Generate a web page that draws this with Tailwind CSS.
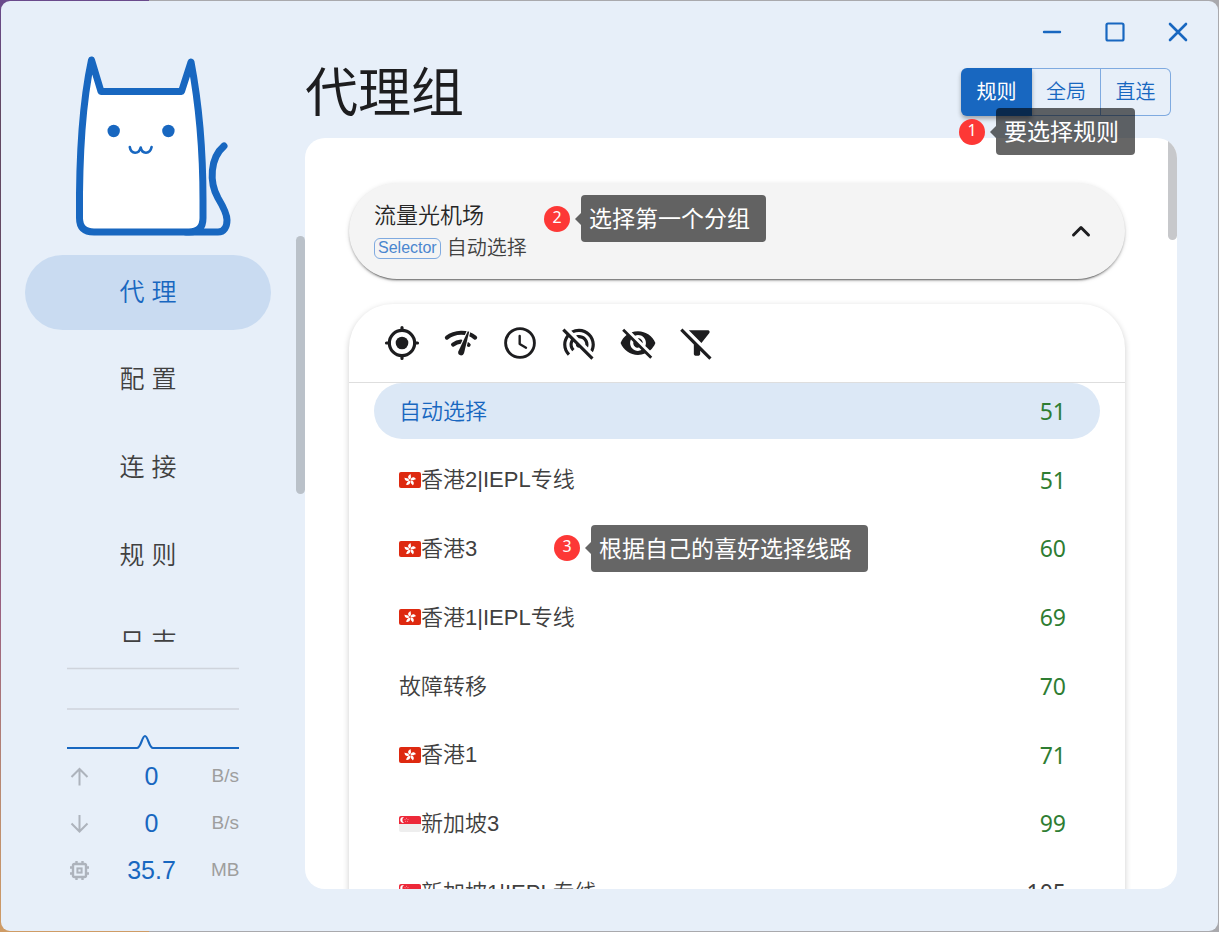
<!DOCTYPE html>
<html lang="zh-CN">
<head>
<meta charset="utf-8">
<meta name="viewport" content="width=device-width, initial-scale=1">
<title>代理组</title>
<script src="https://cdn.jsdelivr.net/npm/@tailwindcss/browser@4"></script>
</head>
<body class="h-screen overflow-hidden font-['Liberation_Sans','Noto_Sans_CJK_SC',sans-serif] font-[350] text-[#404040]">
<svg class="hidden" aria-hidden="true">
  <symbol id="hk" viewBox="0 0 22 16">
    <rect width="22" height="16" rx="2" fill="#de2910"/>
    <g fill="#fff" transform="translate(11 8.2)">
      <path id="petal" d="M-0.200-0.600C-2.800-2.200-2.200-5.300 0.900-6C0.100-4.900 2.200-3 -0.200-0.600Z"/>
      <use href="#petal" transform="rotate(72)"/><use href="#petal" transform="rotate(144)"/>
      <use href="#petal" transform="rotate(216)"/><use href="#petal" transform="rotate(288)"/>
    </g>
  </symbol>
  <symbol id="sg" viewBox="0 0 22 16">
    <path d="M2 0H20Q22 0 22 2V8H0V2Q0 0 2 0Z" fill="#ed2939"/>
    <path d="M0 8H22V14Q22 16 20 16H2Q0 16 0 14Z" fill="#eee"/>
    <path d="M5 1A3 3 0 1 0 5 6.800A3.400 3.400 0 0 1 5 1Z" fill="#fff"/>
    <g fill="#fff" fill-opacity=".6"><circle cx="7.500" cy="2.200" r=".5"/><circle cx="6" cy="3.400" r=".5"/><circle cx="9" cy="3.400" r=".5"/><circle cx="6.600" cy="5.200" r=".5"/><circle cx="8.500" cy="5.200" r=".5"/></g>
  </symbol>
</svg>

<div class="h-full bg-[#a9a9ad] bg-[linear-gradient(to_bottom,#6a4a8c,#624862_12%,#6a4a66_50%,#9a6080_65%,#b98a72_85%,#cf9c66)] bg-[length:149px_100%] bg-no-repeat p-px">
<div class="relative flex h-full overflow-hidden rounded-[9px] bg-[#e7eff9]">

  <!-- Sidebar -->
  <aside class="relative flex w-[304px] shrink-0 flex-col pt-[49px] pb-[38px]">
    <svg class="ml-[68px] h-[192px] w-[168px] shrink-0" viewBox="69 50 168 192" fill="none" stroke="#1867c0" stroke-width="7" stroke-linecap="round" stroke-linejoin="round" role="img" aria-label="Clash">
      <path d="M224 146C210 158 209 182 218 198C224 208 227 214 227 220C227 227 224 232 218 232H186"/>
      <path fill="#fff" d="M79.500 218C79 160 82 104 91.500 60L101 91.500H181.500L191 62C199 104 203 155 203 200V218Q203 232 189 232H94Q79.500 232 79.500 218Z"/>
      <g fill="#1867c0" stroke="none"><circle cx="113.700" cy="131" r="6.200"/><circle cx="168.400" cy="131" r="6.200"/></g>
      <path stroke-width="2.600" d="M129.800 147C131 154.500 139 154.500 140.700 147.500C142 154.500 150 154.500 151.600 147"/>
    </svg>

    <nav class="mt-[13px] ml-6 mr-[34px] h-[387px] shrink-0 overflow-hidden text-[25px]">
      <ul class="grid h-[438px] grid-rows-5">
        <li><a href="#proxies" aria-current="page" class="flex h-[75px] items-center justify-center rounded-full bg-[#c9dbf1] text-[#1867c0]">代 理</a></li>
        <li><a href="#profiles" class="flex h-[75px] items-center justify-center rounded-full">配 置</a></li>
        <li><a href="#connections" class="flex h-[75px] items-center justify-center rounded-full">连 接</a></li>
        <li><a href="#rules" class="flex h-[75px] items-center justify-center rounded-full">规 则</a></li>
        <li><a href="#logs" class="flex h-[75px] items-center justify-center rounded-full">日 志</a></li>
      </ul>
    </nav>

    <div class="mt-6 ml-[66px] w-[172px]">
      <svg class="h-[87px] w-full" viewBox="0 0 172 87" fill="none" aria-hidden="true">
        <path d="M0 2.500H172M0 43H172" stroke="#cfd4dc" stroke-width="1.500"/>
        <path d="M0 82H70C74 82 75 70 78 70S82 82 86 82H172" stroke="#1867c0" stroke-width="2.200"/>
      </svg>
      <dl class="text-[19px] text-[#9e9e9e]">
        <div class="flex h-[47px] items-center justify-between">
          <dt aria-label="上传"><svg class="size-[25px]" viewBox="0 0 25 25" fill="none" stroke="#adb3bc" stroke-width="2"><path d="M12.500 21.500V5M4.500 13L12.500 5L20.500 13"/></svg></dt>
          <dd class="flex-1 text-center font-normal text-[25px] text-[#1867c0]">0</dd><dd class="w-7 text-right">B/s</dd>
        </div>
        <div class="flex h-[47px] items-center justify-between">
          <dt aria-label="下载"><svg class="size-[25px]" viewBox="0 0 25 25" fill="none" stroke="#adb3bc" stroke-width="2"><path d="M12.500 4V20.500M4.500 12.500L12.500 20.500L20.500 12.500"/></svg></dt>
          <dd class="flex-1 text-center font-normal text-[25px] text-[#1867c0]">0</dd><dd class="w-7 text-right">B/s</dd>
        </div>
        <div class="flex h-[47px] items-center justify-between">
          <dt aria-label="内存"><svg class="size-[25px]" viewBox="0 0 25 25" fill="none" stroke="#adb3bc" stroke-width="2.400"><rect x="6" y="6" width="13" height="13" rx="1.500"/><rect x="10.400" y="10.400" width="4.200" height="4.200" stroke-width="2"/><path d="M9.500 3V6M15.500 3V6M9.500 19V22M15.500 19V22M3 9.500H6M3 15.500H6M19 9.500H22M19 15.500H22"/></svg></dt>
          <dd class="flex-1 text-center font-normal text-[25px] text-[#1867c0]">35.7</dd><dd class="w-7 text-right">MB</dd>
        </div>
      </dl>
    </div>
    <div class="absolute top-[235px] right-0 h-[258px] w-[9px] rounded-full bg-[#bac1c9]"></div>
  </aside>

  <!-- Content -->
  <main class="mr-[41px] mb-[42px] flex min-w-0 flex-1 flex-col">
    <div class="-mr-[14px] flex h-[61px] shrink-0 items-center justify-end gap-[37px]">
      <button aria-label="最小化"><svg class="size-[26px]" viewBox="0 0 26 26" fill="none" stroke="#1867c0" stroke-width="2.400" stroke-linecap="round"><path d="M5 13H21"/></svg></button>
      <button aria-label="最大化"><svg class="size-[26px]" viewBox="0 0 26 26" fill="none" stroke="#1867c0" stroke-width="2.200"><rect x="4.500" y="4.500" width="17" height="17" rx="1.500"/></svg></button>
      <button aria-label="关闭"><svg class="size-[26px]" viewBox="0 0 26 26" fill="none" stroke="#1867c0" stroke-width="2.600" stroke-linecap="round"><path d="M5 5L21 21M21 5L5 21"/></svg></button>
    </div>

    <header class="flex h-[76px] shrink-0 items-start justify-between">
      <h1 class="text-[53px] leading-[64px] font-normal text-[#1d1d1f]">代理组</h1>
      <div class="relative mt-[6px] mr-[6px] flex h-12 text-[20px] text-[#1867c0]" role="group" aria-label="模式">
        <button class="w-[71px] rounded-l-md bg-[#1867c0] font-normal text-white shadow-[0_3px_4px_rgba(0,0,0,0.3)]" aria-pressed="true">规则</button>
        <button class="w-[69px] border-y border-r border-[#7faae0]">全局</button>
        <button class="w-[70px] rounded-r-md border-y border-r border-[#7faae0]">直连</button>
        <!-- Step 1 -->
        <div class="absolute top-10 -left-[2px] z-10 flex items-center whitespace-nowrap text-white">
          <span class="flex size-[26px] items-center justify-center rounded-full bg-[#fd3836] pb-1 font-['Noto_Sans'] text-[16px] font-normal">1</span>
          <span class="ml-[5px] border-y-[6px] border-r-[6px] border-y-transparent border-r-black/60"></span>
          <span class="flex h-[47px] items-center rounded bg-black/60 pt-[2px] pr-4 pl-2 text-[23px] font-normal">要选择规则</span>
        </div>
      </div>
    </header>

    <section class="relative min-h-0 flex-1 overflow-hidden rounded-[20px] bg-white pt-[45px] pr-[52px] pl-11">
      <div class="relative flex h-24 items-center justify-between rounded-full bg-[#f4f4f4] pr-8 pl-[25px] shadow-[0_3px_1px_-2px_rgba(0,0,0,0.35),0_2px_2px_rgba(0,0,0,0.2),0_1px_5px_rgba(0,0,0,0.12)]">
        <div class="pt-[2px]">
          <h2 class="text-[22px] leading-8 text-[#262626]">流量光机场</h2>
          <p class="flex h-8 items-center gap-[6px] text-[20px]"><span class="flex h-[21px] items-center rounded-md border border-[#7faae0] px-[3px] text-[16px] text-[#4a86cf]">Selector</span>自动选择</p>
        </div>
        <button aria-label="收起" aria-expanded="true"><svg class="size-6" viewBox="0 0 24 24" fill="none" stroke="#1d1d1f" stroke-width="3" stroke-linecap="round" stroke-linejoin="round"><path d="M4.500 16L12 8.500L19.500 16"/></svg></button>
        <!-- Step 2 -->
        <div class="absolute top-3 left-[195px] flex items-center whitespace-nowrap text-white">
          <span class="flex size-[26px] items-center justify-center rounded-full bg-[#fd3836] pb-1 font-['Noto_Sans'] text-[16px] font-normal">2</span>
          <span class="ml-[5px] border-y-[6px] border-r-[6px] border-y-transparent border-r-black/60"></span>
          <span class="flex h-[47px] items-center rounded bg-black/60 pt-[2px] pr-4 pl-2 text-[23px] font-normal">选择第一个分组</span>
        </div>
      </div>

      <div class="mt-[25px] rounded-t-[44px] bg-white shadow-[0_2px_6px_rgba(0,0,0,0.2)]">
        <div class="flex h-[79px] items-center border-b border-[#dedede] pl-[23px] text-[#1d1d1f]">
          <button aria-label="定位" class="flex w-[59px] justify-center"><svg class="size-[38px]" viewBox="0 0 24 24" fill="none" stroke="currentColor" stroke-width="2" stroke-linecap="round"><circle cx="12" cy="12" r="8"/><circle cx="12" cy="12" r="4" fill="currentColor" stroke="none"/><path d="M12 2.200V4M12 20V21.800M2.200 12H4M20 12H21.800"/></svg></button>
          <button aria-label="延迟测试" class="flex w-[59px] justify-center"><svg class="size-[38px]" viewBox="0 0 24 24" fill="none" stroke="currentColor" stroke-width="2.600" stroke-linecap="round"><path d="M3.100 8.600C8 4.600 16 4.300 20.900 8.600"/><path d="M7 13Q9.300 11.200 12 11.100M15 12L16.800 13.200"/><path d="M16.300 4.500L10.300 17.400Q9.800 19.300 11.700 19.800Q13.300 20 13.900 18.400L17.200 4.900Z" fill="currentColor" stroke="#fff" stroke-width="1.400" paint-order="stroke"/></svg></button>
          <button aria-label="按时间排序" class="flex w-[59px] justify-center"><svg class="size-[38px]" viewBox="0 0 24 24" fill="none" stroke="currentColor" stroke-width="1.800" stroke-linecap="round" stroke-linejoin="round"><circle cx="12" cy="12" r="9.100"/><path stroke-width="1.500" d="M11.800 7.500V12.600L15.800 15"/></svg></button>
          <button aria-label="测试地址" class="flex w-[59px] justify-center"><svg class="size-[38px]" viewBox="0 0 24 24" fill="currentColor"><path d="M2.810 2.810 1.390 4.220l2.690 2.690C2.780 8.600 2 10.710 2 13c0 2.760 1.120 5.260 2.930 7.070l1.420-1.420C4.900 17.210 4 15.210 4 13c0-1.750.57-3.350 1.510-4.660l1.430 1.430C6.350 10.700 6 11.810 6 13c0 1.660.68 3.150 1.760 4.240l1.420-1.420C8.450 15.100 8 14.110 8 13c0-.63.15-1.230.41-1.760l1.610 1.610c0 .05-.02.1-.02.15 0 .55.23 1.050.59 1.410.36.36.86.59 1.410.59.05 0 .1-.01.16-.02l7.620 7.620 1.410-1.410zM17.700 14.870c.19-.59.3-1.220.3-1.870 0-3.310-2.690-6-6-6-.65 0-1.280.1-1.870.3l1.710 1.710c.05 0 .11-.01.16-.01 2.210 0 4 1.790 4 4 0 .05-.01.11-.01.16zM12 5c4.420 0 8 3.580 8 8 0 1.220-.27 2.370-.77 3.400l1.490 1.490C21.530 16.450 22 14.780 22 13c0-5.520-4.480-10-10-10-1.780 0-3.440.46-4.890 1.280l1.480 1.480C9.630 5.270 10.780 5 12 5"/></svg></button>
          <button aria-label="隐藏" class="flex w-[59px] justify-center"><svg class="size-[38px]" viewBox="0 0 24 24" fill="currentColor"><path d="M12 7c2.760 0 5 2.240 5 5 0 .65-.13 1.260-.36 1.830l2.920 2.920c1.510-1.260 2.700-2.890 3.430-4.750-1.730-4.390-6-7.500-11-7.500-1.400 0-2.740.25-3.980.7l2.160 2.160C10.740 7.130 11.350 7 12 7M2 4.270l2.280 2.280.46.46C3.080 8.300 1.780 10.020 1 12c1.730 4.390 6 7.500 11 7.500 1.550 0 3.030-.3 4.380-.84l.42.42L19.730 22 21 20.730 3.270 3zM7.530 9.800l1.550 1.550c-.05.21-.08.43-.08.65 0 1.660 1.340 3 3 3 .22 0 .44-.03.65-.08l1.550 1.550c-.67.33-1.410.53-2.200.53-2.760 0-5-2.240-5-5 0-.79.2-1.530.53-2.200m4.310-.78 3.150 3.150.02-.16c0-1.660-1.340-3-3-3z"/></svg></button>
          <button aria-label="过滤" class="flex w-[59px] justify-center"><svg class="size-[38px]" viewBox="0 0 24 24" fill="currentColor"><path d="M19.790 5.610C20.300 4.950 19.830 4 19 4H6.830l7.970 7.970zM2.810 2.810 1.390 4.220 10 13v6c0 .55.45 1 1 1h2c.55 0 1-.45 1-1v-2.170l5.780 5.780 1.410-1.410z"/></svg></button>
        </div>
        <ul class="grid h-[550px] grid-rows-8 px-[25px] text-[22px]">
          <li><button class="flex h-14 w-full items-center rounded-full bg-[#dce8f6] pr-[34px] pl-[25px] text-[#1867c0]">自动选择<span class="ml-auto font-['Noto_Sans'] font-normal text-[23px] text-[#2e7d32]">51</span></button></li>
          <li><button class="flex h-14 w-full items-center rounded-full pr-[34px] pl-[25px]"><svg class="h-4 w-[22px]"><use href="#hk"/></svg>香港2|IEPL专线<span class="ml-auto font-['Noto_Sans'] font-normal text-[23px] text-[#2e7d32]">51</span></button></li>
          <li class="relative"><button class="flex h-14 w-full items-center rounded-full pr-[34px] pl-[25px]"><svg class="h-4 w-[22px]"><use href="#hk"/></svg>香港3<span class="ml-auto font-['Noto_Sans'] font-normal text-[23px] text-[#2e7d32]">60</span></button>
            <!-- Step 3 -->
            <div class="absolute top-1 left-[180px] flex items-center whitespace-nowrap text-white">
              <span class="flex size-[26px] items-center justify-center rounded-full bg-[#fd3836] pb-1 font-['Noto_Sans'] text-[16px] font-normal">3</span>
              <span class="ml-[5px] border-y-[6px] border-r-[6px] border-y-transparent border-r-black/60"></span>
              <span class="flex h-[47px] items-center rounded bg-black/60 pt-[2px] pr-4 pl-2 text-[23px] font-normal">根据自己的喜好选择线路</span>
            </div>
          </li>
          <li><button class="flex h-14 w-full items-center rounded-full pr-[34px] pl-[25px]"><svg class="h-4 w-[22px]"><use href="#hk"/></svg>香港1|IEPL专线<span class="ml-auto font-['Noto_Sans'] font-normal text-[23px] text-[#2e7d32]">69</span></button></li>
          <li><button class="flex h-14 w-full items-center rounded-full pr-[34px] pl-[25px]">故障转移<span class="ml-auto font-['Noto_Sans'] font-normal text-[23px] text-[#2e7d32]">70</span></button></li>
          <li><button class="flex h-14 w-full items-center rounded-full pr-[34px] pl-[25px]"><svg class="h-4 w-[22px]"><use href="#hk"/></svg>香港1<span class="ml-auto font-['Noto_Sans'] font-normal text-[23px] text-[#2e7d32]">71</span></button></li>
          <li><button class="flex h-14 w-full items-center rounded-full pr-[34px] pl-[25px]"><svg class="h-4 w-[22px]"><use href="#sg"/></svg>新加坡3<span class="ml-auto font-['Noto_Sans'] font-normal text-[23px] text-[#2e7d32]">99</span></button></li>
          <li><button class="flex h-14 w-full items-center rounded-full pr-[34px] pl-[25px]"><svg class="h-4 w-[22px]"><use href="#sg"/></svg>新加坡1|IEPL专线<span class="ml-auto font-['Noto_Sans'] font-normal text-[23px]">105</span></button></li>
        </ul>
      </div>
      <div class="absolute top-0 right-0 h-[102px] w-[9px] rounded-b-full bg-[#c7c8cb]"></div>
    </section>
  </main>
</div>
</div>
</body>
</html>
